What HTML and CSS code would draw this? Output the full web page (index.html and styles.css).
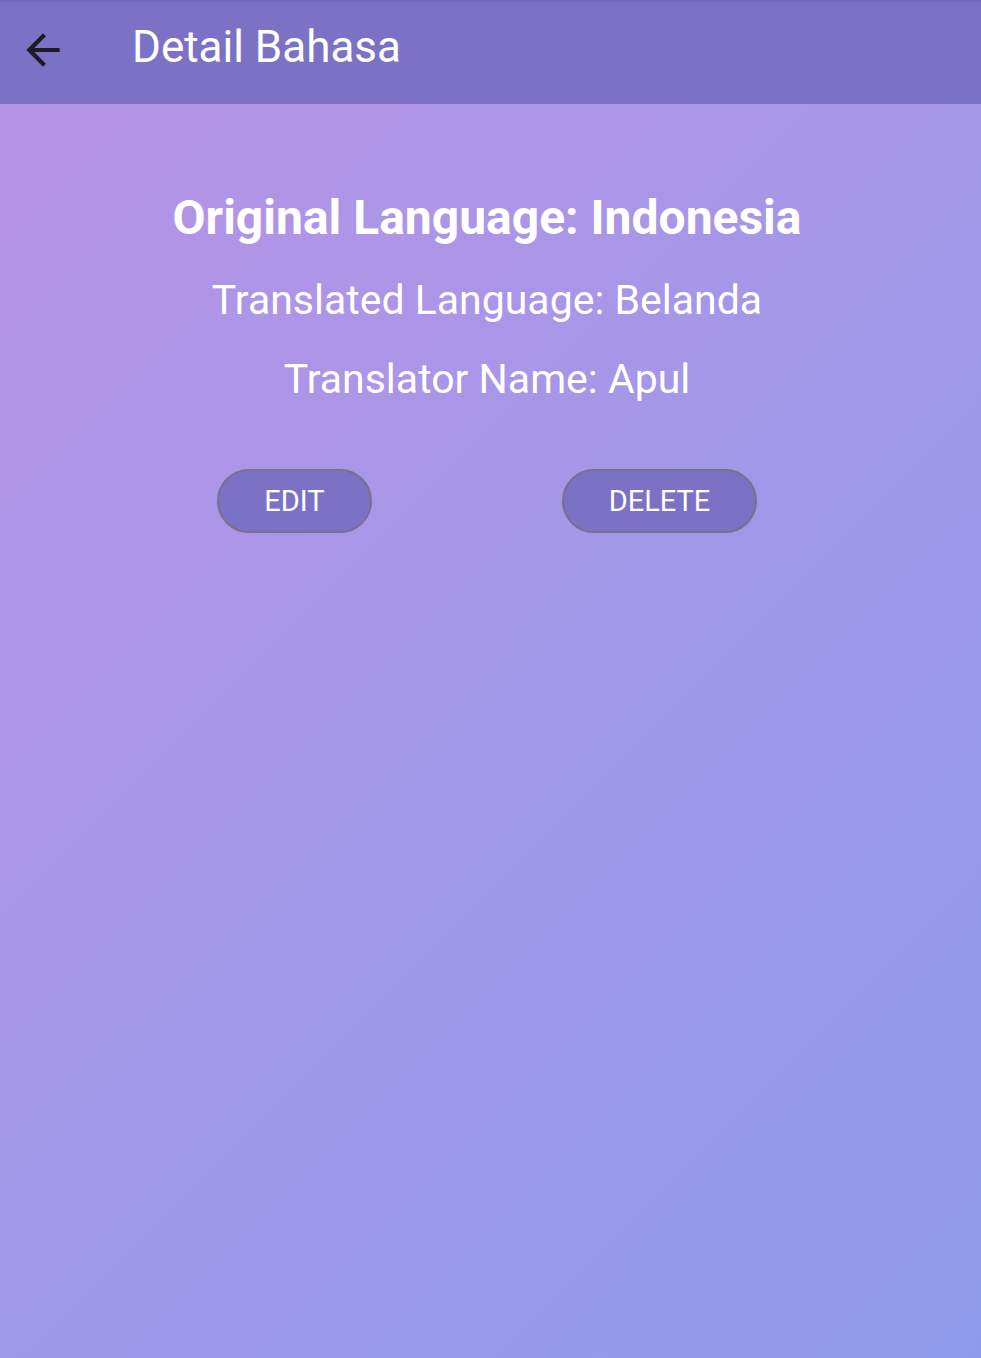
FILE: index.html
```html
<!DOCTYPE html>
<html lang="id">
<head>
<meta charset="utf-8">
<title>Detail Bahasa</title>
<link rel="stylesheet" href="styles.css">
</head>
<body>
<div class="screen">
  <header class="appbar">
    <button class="back" aria-label="Back">
      <svg viewBox="0 0 24 24" width="50" height="50"><path d="M20 11H7.83l5.59-5.59L12 4l-8 8 8 8 1.41-1.41L7.83 13H20v-2z" fill="#1f1a24"/></svg>
    </button>
    <h1 class="title">Detail Bahasa</h1>
  </header>
  <main class="content">
    <h2 class="original">Original Language: Indonesia</h2>
    <p class="line translated">Translated Language: Belanda</p>
    <p class="line translator">Translator Name: Apul</p>
    <div class="actions">
      <button class="btn btn-edit">EDIT</button>
      <button class="btn btn-delete">DELETE</button>
    </div>
  </main>
</div>
</body>
</html>
```

FILE: styles.css
```css
html, body {
  margin: 0;
  padding: 0;
  height: 100%;
}
body {
  font-family: Roboto, "Noto Sans", sans-serif;
  color: #fff;
}
.screen {
  display: flex;
  flex-direction: column;
  min-height: 1358px;
  background: linear-gradient(135deg, #b993e6 0%, #a397e8 50%, #8e9bec 100%);
}
.appbar {
  height: 104px;
  box-sizing: border-box;
  background: #7c72c5;
  border-top: 2px solid #756abd;
  display: flex;
  align-items: center;
  padding-left: 18px;
}
.back {
  width: 50px;
  height: 50px;
  padding: 0;
  border: 0;
  background: none;
  display: flex;
  margin-top: -6px;
}
.title {
  margin: -12px 0 0 64px;
  font-size: 44px;
  font-weight: 400;
  color: #fff;
}
.content {
  display: flex;
  flex-direction: column;
  align-items: center;
  padding-top: 84px;
  padding-right: 7px;
}
.original {
  margin: 0;
  font-size: 48px;
  font-weight: 700;
  line-height: 60px;
}
.line {
  margin: 0;
  font-size: 41px;
  line-height: 50px;
}
.translated {
  margin-top: 27px;
}
.translator {
  margin-top: 29px;
}
.actions {
  display: flex;
  justify-content: center;
  gap: 190px;
  margin-top: 65px;
}
.btn {
  height: 64px;
  box-sizing: border-box;
  border: 2px solid #77708e;
  border-radius: 32px;
  background: #7c72c5;
  color: #fff;
  font-family: Roboto, sans-serif;
  font-size: 29px;
  padding: 0;
}
.btn-edit { width: 155px; }
.btn-delete { width: 195px; }
```
